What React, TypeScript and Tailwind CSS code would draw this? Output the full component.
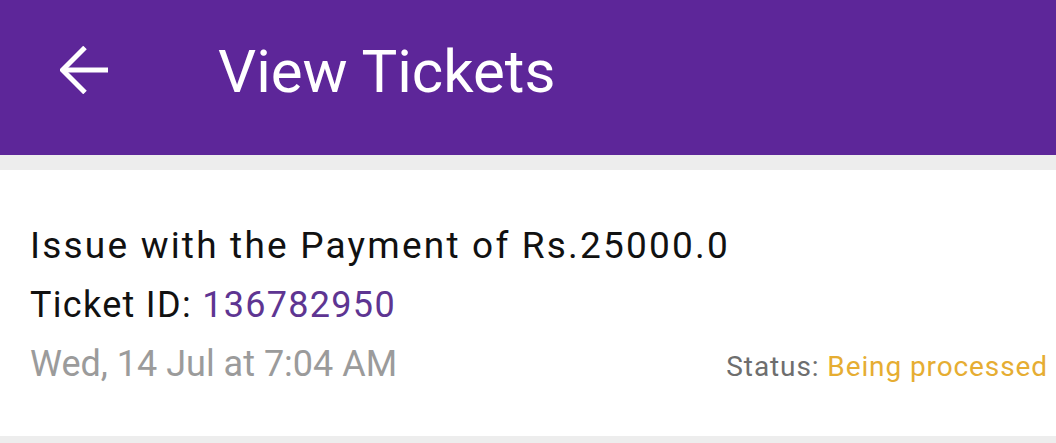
import React from "react";

export default function App() {
  return (
    <div className="w-[1056px] h-[443px] bg-[#ededed] overflow-hidden" style={{ fontFamily: "Roboto, sans-serif" }}>
      <header className="h-[155px] bg-[#5d2699] flex items-start">
        <div className="w-[218px] pl-[60px] pt-[46px]">
          <svg width="50" height="48" viewBox="0 0 50 48" fill="none" stroke="white" strokeWidth="5">
            <path d="M3 24H48" />
            <path d="M25 1.5L2.5 24L25 46.5" />
          </svg>
        </div>
        <h1 className="text-white text-[60px] leading-[60px] pt-[42px]">View Tickets</h1>
      </header>
      <div className="h-[15px]" />
      <div className="bg-white h-[266px] pl-[30px] pr-[8px] pt-[46px]">
        <div className="text-[37px] leading-[60px] tracking-[2.2px] text-[#111111]">Issue with the Payment of Rs.25000.0</div>
        <div className="text-[36px] leading-[58px] tracking-[1.3px] text-[#111111]">
          Ticket ID: <span className="text-[#5e3592]">136782950</span>
        </div>
        <div className="flex items-baseline justify-between leading-[60px]">
          <span className="text-[36px] text-[#9b9b9b]">Wed, 14 Jul at 7:04 AM</span>
          <span className="text-[28px] tracking-[0.9px] text-[#6e6e6e]">
            Status: <span className="text-[#e6ad32]">Being processed</span>
          </span>
        </div>
      </div>
    </div>
  );
}
